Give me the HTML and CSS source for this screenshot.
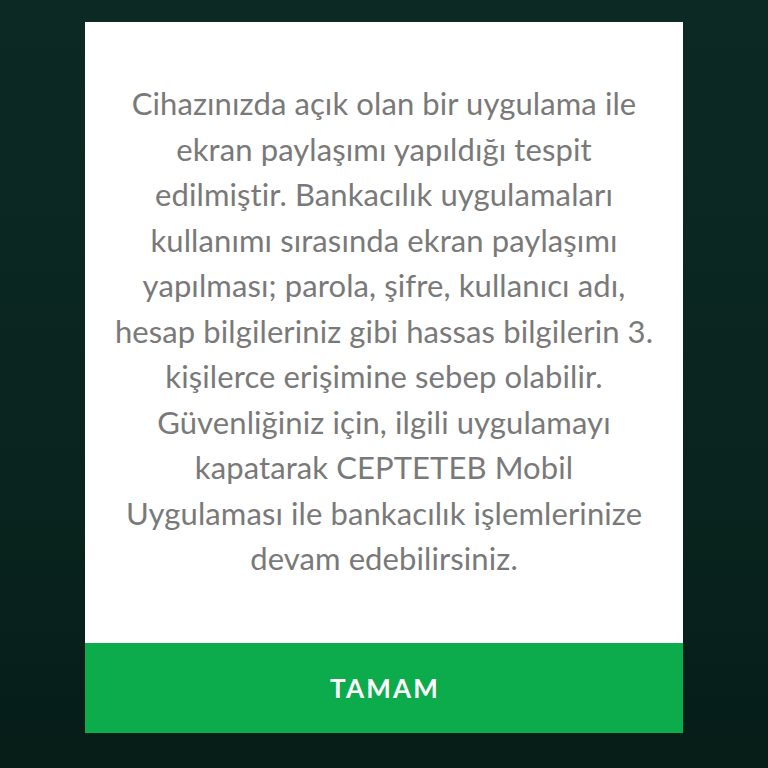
FILE: index.html
```html
<!DOCTYPE html>
<html lang="tr">
<head>
<meta charset="utf-8">
<title>Uyarı</title>
<link rel="stylesheet" href="styles.css">
</head>
<body>
<div class="dialog">
  <p class="message">Cihazınızda açık olan bir uygulama ile<br>ekran paylaşımı yapıldığı tespit<br>edilmiştir. Bankacılık uygulamaları<br>kullanımı sırasında ekran paylaşımı<br>yapılması; parola, şifre, kullanıcı adı,<br>hesap bilgileriniz gibi hassas bilgilerin 3.<br>kişilerce erişimine sebep olabilir.<br>Güvenliğiniz için, ilgili uygulamayı<br>kapatarak CEPTETEB Mobil<br>Uygulaması ile bankacılık işlemlerinize<br>devam edebilirsiniz.</p>
  <button class="ok">TAMAM</button>
</div>
</body>
</html>
```

FILE: styles.css
```css
html, body {
  margin: 0;
  padding: 0;
  height: 100%;
}
body {
  background: linear-gradient(180deg, #0c2a23 0%, #09241e 60%, #061d18 100%);
  font-family: "Lato", "Liberation Sans", sans-serif;
  padding-top: 22px;
  box-sizing: border-box;
}
.dialog {
  width: 598px;
  margin-left: 85px;
  background: #ffffff;
  display: flex;
  flex-direction: column;
}
.message {
  margin: 0;
  padding: 59px 0 61px;
  text-align: center;
  font-size: 31px;
  font-weight: 400;
  letter-spacing: 0.1px;
  line-height: 45.5px;
  color: #797979;
  white-space: nowrap;
}
.ok {
  height: 90px;
  border: 0;
  margin: 0;
  background: #0cab4b;
  color: #ffffff;
  font-family: "Lato", "Liberation Sans", sans-serif;
  font-weight: 700;
  font-size: 26px;
  letter-spacing: 2.2px;
  text-indent: 2px;
  padding: 0;
}
```
